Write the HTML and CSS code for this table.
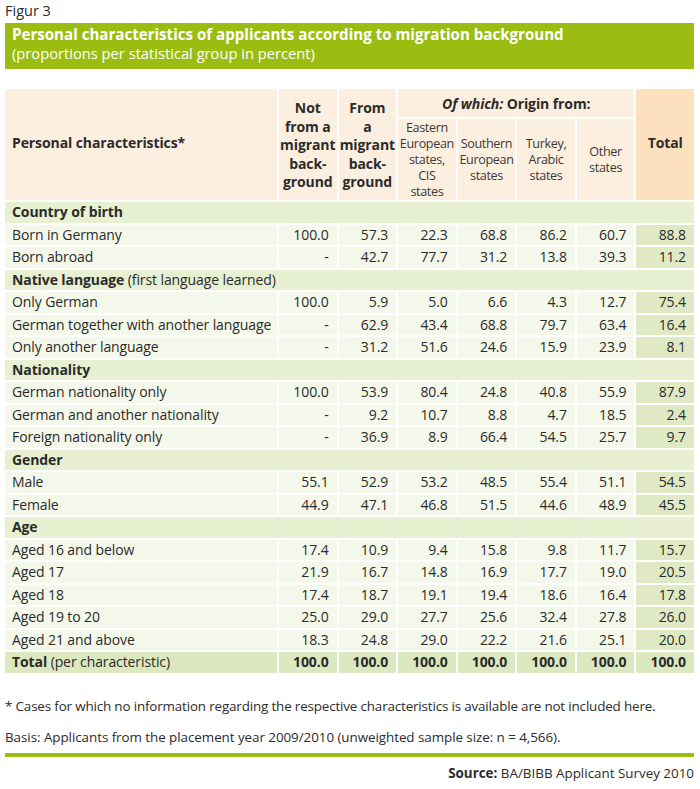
FILE: index.html
```html
<!DOCTYPE html>
<html lang="en">
<head>
<meta charset="utf-8">
<title>Figur 3</title>
<link rel="stylesheet" href="styles.css">
</head>
<body>
<div class="page">
  <div class="fig-label">Figur 3</div>
  <div class="banner">
    <div class="banner-title">Personal characteristics of applicants according to migration background</div>
    <div class="banner-sub">(proportions per statistical group in percent)</div>
  </div>
  <table class="data">
    <colgroup>
      <col class="c-label">
      <col class="c-num"><col class="c-num"><col class="c-num"><col class="c-num"><col class="c-num"><col class="c-num"><col class="c-num">
    </colgroup>
    <thead>
      <tr class="h1">
        <th rowspan="2" class="h-label">Personal characteristics*</th>
        <th rowspan="2" class="h-bold">Not<br>from a<br>migrant<br>back-<br>ground</th>
        <th rowspan="2" class="h-bold">From<br>a<br>migrant<br>back-<br>ground</th>
        <th colspan="4" class="h-group"><em>Of which:</em> Origin from:</th>
        <th rowspan="2" class="h-total">Total</th>
      </tr>
      <tr class="h2">
        <th class="h-reg">Eastern<br>European<br>states,<br>CIS<br>states</th>
        <th class="h-reg">Southern<br>European<br>states</th>
        <th class="h-reg">Turkey,<br>Arabic<br>states</th>
        <th class="h-reg">Other<br>states</th>
      </tr>
    </thead>
    <tbody>
      <tr class="sec"><td colspan="8"><b>Country of birth</b></td></tr>
      <tr><td>Born in Germany</td><td>100.0</td><td>57.3</td><td>22.3</td><td>68.8</td><td>86.2</td><td>60.7</td><td class="tot">88.8</td></tr>
      <tr><td>Born abroad</td><td>-</td><td>42.7</td><td>77.7</td><td>31.2</td><td>13.8</td><td>39.3</td><td class="tot">11.2</td></tr>
      <tr class="sec"><td colspan="8"><b>Native language</b> (first language learned)</td></tr>
      <tr><td>Only German</td><td>100.0</td><td>5.9</td><td>5.0</td><td>6.6</td><td>4.3</td><td>12.7</td><td class="tot">75.4</td></tr>
      <tr><td>German together with another language</td><td>-</td><td>62.9</td><td>43.4</td><td>68.8</td><td>79.7</td><td>63.4</td><td class="tot">16.4</td></tr>
      <tr><td>Only another language</td><td>-</td><td>31.2</td><td>51.6</td><td>24.6</td><td>15.9</td><td>23.9</td><td class="tot">8.1</td></tr>
      <tr class="sec"><td colspan="8"><b>Nationality</b></td></tr>
      <tr><td>German nationality only</td><td>100.0</td><td>53.9</td><td>80.4</td><td>24.8</td><td>40.8</td><td>55.9</td><td class="tot">87.9</td></tr>
      <tr><td>German and another nationality</td><td>-</td><td>9.2</td><td>10.7</td><td>8.8</td><td>4.7</td><td>18.5</td><td class="tot">2.4</td></tr>
      <tr><td>Foreign nationality only</td><td>-</td><td>36.9</td><td>8.9</td><td>66.4</td><td>54.5</td><td>25.7</td><td class="tot">9.7</td></tr>
      <tr class="sec"><td colspan="8"><b>Gender</b></td></tr>
      <tr><td>Male</td><td>55.1</td><td>52.9</td><td>53.2</td><td>48.5</td><td>55.4</td><td>51.1</td><td class="tot">54.5</td></tr>
      <tr><td>Female</td><td>44.9</td><td>47.1</td><td>46.8</td><td>51.5</td><td>44.6</td><td>48.9</td><td class="tot">45.5</td></tr>
      <tr class="sec"><td colspan="8"><b>Age</b></td></tr>
      <tr><td>Aged 16 and below</td><td>17.4</td><td>10.9</td><td>9.4</td><td>15.8</td><td>9.8</td><td>11.7</td><td class="tot">15.7</td></tr>
      <tr><td>Aged 17</td><td>21.9</td><td>16.7</td><td>14.8</td><td>16.9</td><td>17.7</td><td>19.0</td><td class="tot">20.5</td></tr>
      <tr><td>Aged 18</td><td>17.4</td><td>18.7</td><td>19.1</td><td>19.4</td><td>18.6</td><td>16.4</td><td class="tot">17.8</td></tr>
      <tr><td>Aged 19 to 20</td><td>25.0</td><td>29.0</td><td>27.7</td><td>25.6</td><td>32.4</td><td>27.8</td><td class="tot">26.0</td></tr>
      <tr><td>Aged 21 and above</td><td>18.3</td><td>24.8</td><td>29.0</td><td>22.2</td><td>21.6</td><td>25.1</td><td class="tot">20.0</td></tr>
      <tr class="total"><td><b>Total</b> (per characteristic)</td><td>100.0</td><td>100.0</td><td>100.0</td><td>100.0</td><td>100.0</td><td>100.0</td><td>100.0</td></tr>
    </tbody>
  </table>
  <p class="note">* Cases for which no information regarding the respective characteristics is available are not included here.</p>
  <p class="basis">Basis: Applicants from the placement year 2009/2010 (unweighted sample size: n = 4,566).</p>
  <div class="source"><b>Source:</b> BA/BIBB Applicant Survey 2010</div>
</div>
</body>
</html>
```

FILE: styles.css
```css
html, body {
  margin: 0;
  padding: 0;
  background: #ffffff;
}

body {
  font-family: "Open Sans", "Noto Sans", sans-serif;
  color: #2b2b2b;
}

.page {
  width: 689px;
  padding: 0 6px 0 5px;
}

.fig-label {
  font-size: 14.5px;
  line-height: 18px;
  margin-top: 2px;
  height: 21px;
}

.banner {
  background: #9bbd12;
  padding: 2px 7px 6px 7px;
  color: #ffffff;
}

.banner-title {
  font-size: 15.1px;
  font-weight: 700;
  line-height: 19px;
}

.banner-sub {
  font-size: 14.7px;
  line-height: 19px;
}

.data {
  border-collapse: separate;
  border-spacing: 2px;
  margin: 18px -2px 0 -2px;
  width: 693px;
  table-layout: fixed;
  font-size: 14px;
  letter-spacing: -0.1px;
}

.c-label { width: 272px; }

.data th {
  background: #fdefdf;
  padding: 0;
  font-weight: 700;
  color: #2b2b2b;
}

.data .h1 th { height: 28px; }

.h-label {
  text-align: left;
  padding-left: 7px !important;
  padding-bottom: 4px !important;
  font-size: 14px;
}

.h-bold {
  font-size: 14px;
  line-height: 18.5px;
  white-space: nowrap;
  padding-top: 2px !important;
}

.h-group {
  font-size: 14px;
}

.h-total {
  background: #fde1bf !important;
  font-size: 14px;
  padding-bottom: 4px !important;
}

.h-reg {
  font-weight: 400 !important;
  font-size: 12.6px;
  letter-spacing: -0.35px;
  line-height: 16px;
  height: 81px;
  color: #3a3a3a !important;
  white-space: nowrap;
}

.data td {
  background: #f4f8ea;
  height: 20.5px;
  line-height: 20px;
  padding: 0 8px 0 10px;
  text-align: right;
  white-space: nowrap;
}

.data td:first-child {
  text-align: left;
  padding-left: 7px;
}

.data td.tot {
  background: #dfeac4;
}

.data tr.sec td {
  background: #e8f0d2;
  text-align: left;
}

.data tr.total td {
  background: #dce8c0;
  font-weight: 700;
}

.data tr.total td:first-child {
  font-weight: 400;
}

.note {
  font-size: 13.4px;
  letter-spacing: -0.15px;
  line-height: 20px;
  margin: 21px 0 0 0;
  white-space: nowrap;
}

.basis {
  font-size: 13.4px;
  letter-spacing: -0.05px;
  line-height: 20px;
  margin: 11px 0 0 0;
  padding-bottom: 6px;
  border-bottom: 4px solid #9bbd12;
}

.source {
  font-size: 13.4px;
  line-height: 20px;
  margin-top: 6px;
  text-align: right;
}
```
